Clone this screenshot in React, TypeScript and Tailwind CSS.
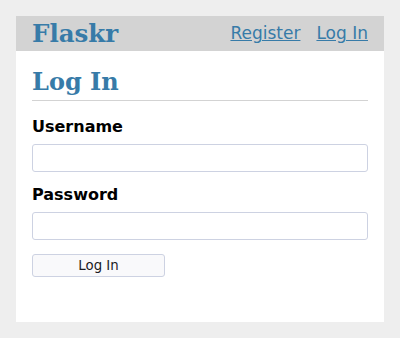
import React, { useState } from 'react';

const serif = { fontFamily: '"DejaVu Serif", serif' };

const App: React.FC = () => {
  const [username, setUsername] = useState('');
  const [password, setPassword] = useState('');

  return (
    <div className="min-h-[338px] bg-[#eeeeee] p-4 font-['DejaVu_Sans',sans-serif] text-black">
      <div className="bg-white">
        <nav className="flex items-center bg-[#d3d3d3] px-2">
          <h1 className="flex-auto m-0 text-[24.5px] leading-[28px] font-bold" style={serif}>
            <a href="#" className="px-2 py-1 text-[#377ba8] no-underline">Flaskr</a>
          </h1>
          <ul className="flex m-0 p-0 list-none">
            <li><a href="#" className="block p-2 text-[17px] leading-[19px] text-[#377ba8] underline">Register</a></li>
            <li><a href="#" className="block p-2 text-[17px] leading-[19px] text-[#377ba8] underline">Log In</a></li>
          </ul>
        </nav>
        <section className="px-4 pb-4">
          <header className="flex items-end border-b border-[#d3d3d3]">
            <h1 className="flex-auto mt-4 mb-1 text-[24px] leading-[29px] font-bold text-[#377ba8]" style={serif}>Log In</h1>
          </header>
          <form className="my-4 flex flex-col" onSubmit={e => e.preventDefault()}>
            <label className="mb-2 text-[16px] leading-[19px] font-bold">Username</label>
            <input
              className="mb-[13.33px] h-[28px] rounded-[3px] border border-[#cdd2e2] bg-white px-1 text-[13.33px] outline-none"
              value={username}
              onChange={e => setUsername(e.target.value)}
            />
            <label className="mb-2 text-[16px] leading-[19px] font-bold">Password</label>
            <input
              type="password"
              className="mb-[13.33px] h-[28px] rounded-[3px] border border-[#cdd2e2] bg-white px-1 text-[13.33px] outline-none"
              value={password}
              onChange={e => setPassword(e.target.value)}
            />
            <button
              type="submit"
              className="mb-[13.33px] h-[23px] w-[133px] self-start rounded-[3px] border border-[#cdd2e2] bg-[#f9f9fb] pt-px text-[13.33px] leading-none text-[#1b1b1f]"
            >
              Log In
            </button>
          </form>
        </section>
      </div>
    </div>
  );
};

export default App;
